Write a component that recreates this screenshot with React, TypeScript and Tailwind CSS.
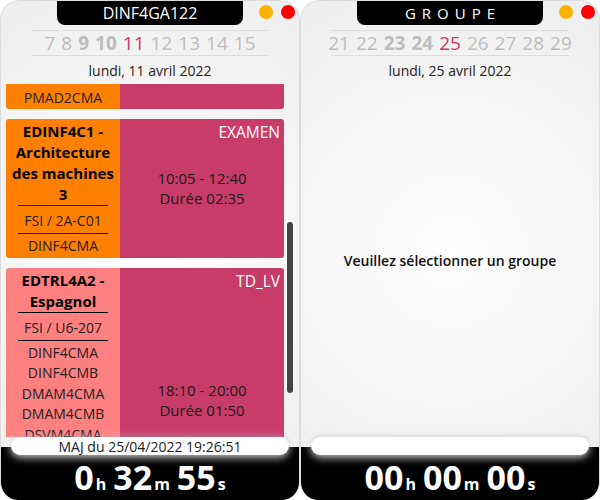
import React from "react";

type Ev = {
  title: string[];
  room: string;
  groups: string[];
  type: string;
  time: string;
  duration: string;
  color: string;
  pb: string;
};

const EVENTS: Ev[] = [
  {
    title: ["PMAD2C1 -", "Analyse"],
    room: "FSI / 1A-B12",
    groups: ["DINF4CMA", "PMAD2CMA"],
    type: "CM",
    time: "08:00 - 09:55",
    duration: "Durée 01:55",
    color: "bg-[#ff8000]",
    pb: "pb-[1px]",
  },
  {
    title: ["EDINF4C1 -", "Architecture", "des machines", "3"],
    room: "FSI / 2A-C01",
    groups: ["DINF4CMA"],
    type: "EXAMEN",
    time: "10:05 - 12:40",
    duration: "Durée 02:35",
    color: "bg-[#ff8000]",
    pb: "pb-[1px]",
  },
  {
    title: ["EDTRL4A2 -", "Espagnol"],
    room: "FSI / U6-207",
    groups: ["DINF4CMA", "DINF4CMB", "DMAM4CMA", "DMAM4CMB", "DSVM4CMA", "DSVM4CMB", "DPHY4CMA", "DCHI4CMA", "DMEC4CMA"],
    type: "TD_LV",
    time: "18:10 - 20:00",
    duration: "Durée 01:50",
    color: "bg-[#ff8080]",
    pb: "pb-[6px]",
  },
];

function Event({ ev }: { ev: Ev }) {
  return (
    <div className="flex rounded-[3px] overflow-hidden">
      <div className={`w-[114px] shrink-0 text-center ${ev.color} pt-[2px]`}>
        <div className="font-bold text-[15px] leading-[21px] text-black">
          {ev.title.map((t) => (
            <div key={t}>{t}</div>
          ))}
        </div>
        <div className="mx-[12px] border-t border-black" />
        <div className="pt-[5px] pb-[2px] text-[14px] leading-[20px] text-[#222]">{ev.room}</div>
        <div className="mx-[12px] border-t border-black" />
        <div className={`pt-[2px] ${ev.pb} text-[14px] leading-[20.5px] text-[#222]`}>
          {ev.groups.map((g) => (
            <div key={g}>{g}</div>
          ))}
        </div>
      </div>
      <div className="relative flex-1 bg-[#c73c69] flex flex-col items-center justify-center text-[15px] leading-[20px] text-[#1a1a1a]">
        <div className="absolute top-[3px] right-[4px] text-[15.5px] text-white">{ev.type}</div>
        <div>{ev.time}</div>
        <div>{ev.duration}</div>
      </div>
    </div>
  );
}

function Timer({ parts }: { parts: [string, string][] }) {
  return (
    <div className="flex items-baseline justify-center gap-[7px] text-white font-bold">
      {parts.map(([n, u]) => (
        <span key={u}>
          <span className="text-[34px] leading-[40px]">{n}</span>
          <span className="text-[16px] ml-[2px]">{u}</span>
        </span>
      ))}
    </div>
  );
}

function Panel({
  title,
  spaced,
  days,
  date,
  children,
  maj,
  timer,
}: {
  title: string;
  spaced?: boolean;
  days: { n: number; bold?: boolean; active?: boolean }[];
  date: string;
  children: React.ReactNode;
  maj: string;
  timer: [string, string][];
}) {
  return (
    <div className="w-[300px] h-[500px] flex flex-col rounded-t-[20px] rounded-b-[18px] border-t border-x border-[#dcdcdc] bg-[radial-gradient(circle_at_50%_50%,#ffffff_0%,#f4f4f4_60%,#eeeeee_100%)] overflow-hidden">
      <div className="relative h-[24px] flex justify-center shrink-0">
        <div
          className={`w-[186px] h-[24px] bg-black rounded-b-[8px] text-white flex items-center justify-center ${
            spaced ? "text-[15px] tracking-[6px] pl-[6px]" : "text-[16px]"
          }`}
        >
          {title}
        </div>
        <div className="absolute right-[4px] top-[4px] flex gap-[8px]">
          <div className="w-[14px] h-[14px] rounded-full bg-[#ffb300]" />
          <div className="w-[14px] h-[14px] rounded-full bg-[#ff0000]" />
        </div>
      </div>
      <div className="mt-[5px] mx-[30px] h-[26px] border-y border-[#dddddd] flex items-center justify-center gap-[6px] text-[19px] text-[#bdbdbd] shrink-0">
        {days.map((d) => (
          <span
            key={d.n}
            className={`${d.bold ? "font-bold" : ""} ${d.active ? "text-[#c8386a]" : ""}`}
          >
            {d.n}
          </span>
        ))}
      </div>
      <div className="h-[28px] flex items-center justify-center text-[14px] text-[#222] shrink-0">{date}</div>
      <div className="relative flex-1 overflow-hidden">{children}</div>
      <div className="shrink-0">
        <div className="relative z-10 mx-[10px] h-[18px] rounded-full bg-white flex items-center justify-center text-[14px] text-[#222] shadow-[0_-1px_5px_rgba(0,0,40,0.15),0_2px_8px_rgba(255,255,255,0.9)]">
          {maj}
        </div>
        <div className="-mt-[8px] h-[53px] bg-black rounded-b-[16px] pt-[10px]">
          <Timer parts={timer} />
        </div>
      </div>
    </div>
  );
}

export default function App() {
  return (
    <div className="w-[600px] h-[500px] bg-white flex font-['Open_Sans',sans-serif]">
      <Panel
        title="DINF4GA122"
        days={[
          { n: 7 },
          { n: 8 },
          { n: 9, bold: true },
          { n: 10, bold: true },
          { n: 11, active: true },
          { n: 12 },
          { n: 13 },
          { n: 14 },
          { n: 15 },
        ]}
        date="lundi, 11 avril 2022"
        maj="MAJ du 25/04/2022 19:26:51"
        timer={[
          ["0", "h"],
          ["32", "m"],
          ["55", "s"],
        ]}
      >
        <div className="ml-[5px] w-[278px] -mt-[92px] flex flex-col gap-[10px]">
          {EVENTS.map((ev) => (
            <Event key={ev.title[0]} ev={ev} />
          ))}
        </div>
        <div className="absolute right-[6px] top-[138px] w-[6px] h-[171px] rounded-full bg-[#444]" />
      </Panel>
      <Panel
        title="GROUPE"
        spaced
        days={[
          { n: 21 },
          { n: 22 },
          { n: 23, bold: true },
          { n: 24, bold: true },
          { n: 25, active: true },
          { n: 26 },
          { n: 27 },
          { n: 28 },
          { n: 29 },
        ]}
        date="lundi, 25 avril 2022"
        maj=""
        timer={[
          ["00", "h"],
          ["00", "m"],
          ["00", "s"],
        ]}
      >
        <div className="h-full flex items-center justify-center text-[14px] font-semibold text-[#111]">
          Veuillez sélectionner un groupe
        </div>
      </Panel>
    </div>
  );
}
